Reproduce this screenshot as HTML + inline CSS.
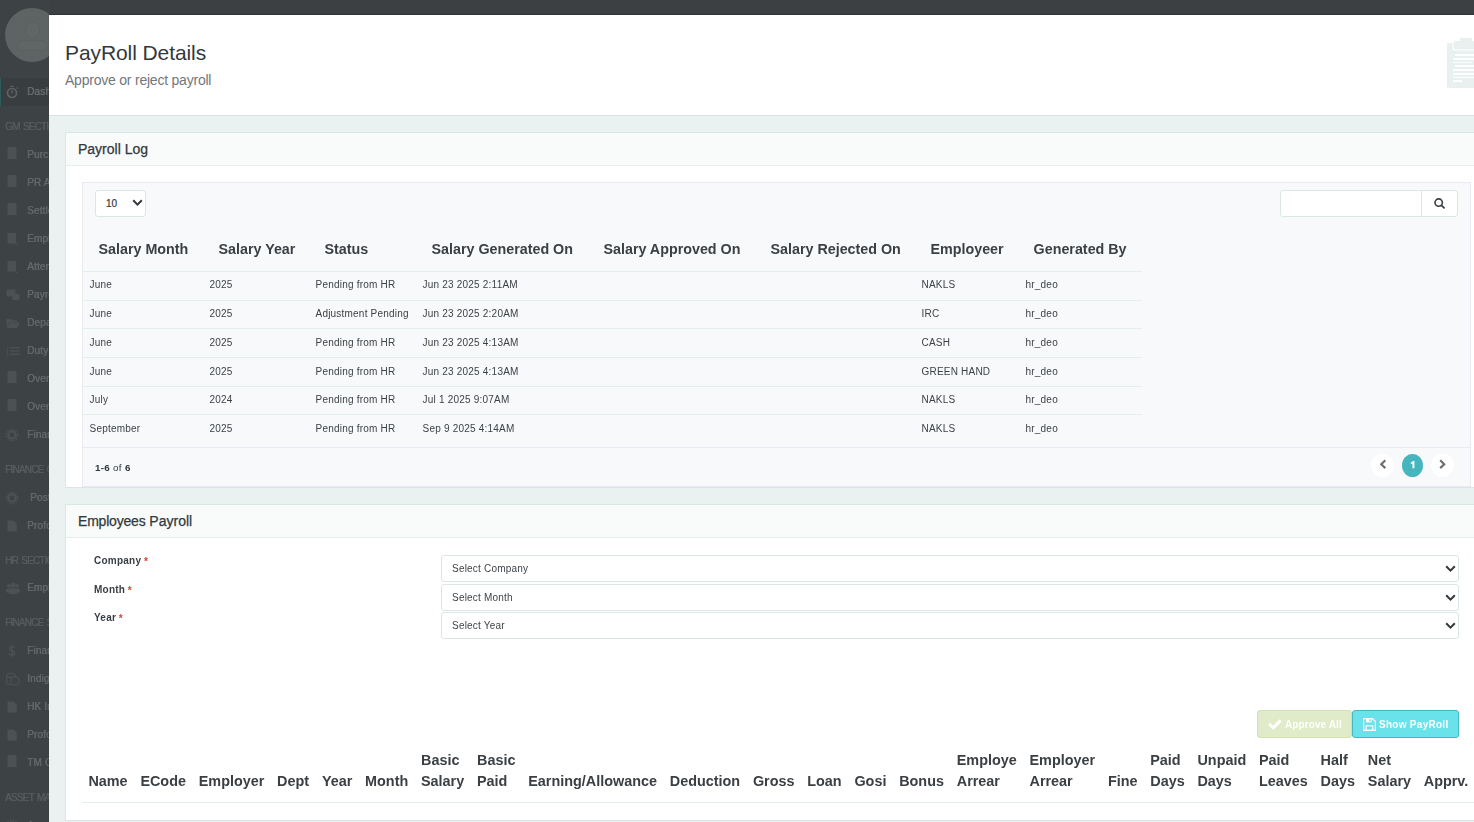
<!DOCTYPE html>
<html>
<head>
<meta charset="utf-8">
<title>PayRoll Details</title>
<style>
*{box-sizing:border-box;margin:0;padding:0}
html,body{width:1474px;height:822px;overflow:hidden;background:#3c4042;font-family:"Liberation Sans",sans-serif;color:#3a3f44}
.abs{position:absolute}
/* ---------- dimmed sidebar ---------- */
#side{position:absolute;left:0;top:0;width:49px;height:822px;background:#3d4244;overflow:hidden}
#side .avatar{position:absolute;left:5.3px;top:7.8px;width:54px;height:54px;border-radius:50%;background:#5e6364;overflow:hidden}
#side .avatar i{position:absolute;background:#606566;border:1px solid #5a5f60;border-radius:50%}
#side .active{position:absolute;left:0;top:78px;width:49px;height:28px;background:#383d3f;border-left:1px solid #2c5c5d}
#side .lbl{position:absolute;left:5px;font-size:10px;line-height:12px;color:#565b5d;white-space:nowrap;letter-spacing:-.8px;word-spacing:1.2px;will-change:transform;text-shadow:.4px 0 0 #565b5d}
#side .it{position:absolute;font-size:10px;letter-spacing:.15px;line-height:14px;color:#62686a;white-space:nowrap;will-change:transform;text-shadow:.4px 0 0 #62686a}
#side .ic{position:absolute}
#topbar{position:absolute;left:49px;top:0;width:1425px;height:15px;background:#3c4042}
/* ---------- modal ---------- */
#modal{position:absolute;left:49px;top:15px;width:1425px;height:807px;background:#e9f2f1;overflow:hidden;box-shadow:0 -1px 1px rgba(0,0,0,.16)}
#hdr{position:absolute;left:0;top:0;width:1425px;height:101px;background:#fff;border-bottom:1px solid #d5e5e3}
#hdr h1{position:absolute;left:16px;top:25px;font-size:21px;letter-spacing:-.09px;font-weight:400;line-height:26px;color:#33383c;white-space:nowrap}
#hdr p{position:absolute;left:16px;top:56px;font-size:14px;letter-spacing:-.22px;line-height:18px;color:#73777b;white-space:nowrap}
.panel{position:absolute;left:16px;width:1425px;background:#fff;border:1px solid #d9e8e6}
.panel .ph{position:absolute;left:0;top:0;width:100%;height:33px;background:#f9fbfb;border-bottom:1px solid #e3eeed}
.panel .ph span{position:absolute;left:12px;top:8px;font-size:14px;line-height:16px;color:#33383c;white-space:nowrap;-webkit-text-stroke:.25px #33383c}

/* ---------- grid (panel 1) ---------- */
#grid{position:absolute;left:16px;top:49px;width:1389px;height:305px;background:#f8f9fb;border:1px solid #e8eaf1}
.sel{position:absolute;background:#fff;border:1px solid #dbe7e6;border-radius:3px}
.chev{position:absolute}
#len{left:12px;top:7px;width:51px;height:27px}
#len span{position:absolute;left:10px;top:7px;font-size:10px;line-height:12px;color:#33383c;-webkit-text-stroke:.2px #33383c}
#srch{position:absolute;left:1197px;top:7px;width:142px;height:27px;background:#fff;border:1px solid #dbe7e6;border-radius:3px 0 0 3px}
#sbtn{position:absolute;left:1338px;top:7px;width:37px;height:27px;background:#fff;border:1px solid #dbe7e6;border-radius:0 3px 3px 0}
#tbl{position:absolute;left:0;top:40px;border-collapse:collapse;table-layout:fixed;width:1059px}
#tbl tr:last-child td{border-bottom:0}
#tbl th{font-size:14.3px;font-weight:700;text-align:left;padding:4px 0 0 15.5px;height:48px;line-height:16px;color:#3a3f44;white-space:nowrap;vertical-align:middle;border-bottom:1px solid #e4eeed}
#tbl td{font-size:10px;letter-spacing:.21px;padding:0 0 0 6.5px;line-height:14px;color:#3d4247;white-space:nowrap;vertical-align:middle;border-bottom:1px solid #e4eeed}
#foot{position:absolute;left:0;top:264px;width:1387px;height:39px;border-top:1px solid #e8eaf1}
#foot .cnt{position:absolute;left:12.4px;top:14px;letter-spacing:.3px;font-size:9.8px;line-height:12px;color:#33383c}
.pg{position:absolute;top:6px;width:23px;height:23px;border-radius:50%;background:#fff}
.pg svg{position:absolute;left:0;top:0}
.pg b{position:absolute;left:0;top:5px;width:21px;text-align:center;font-size:10px;line-height:12px;color:#fff}

/* ---------- panel 2 ---------- */
.flabel{position:absolute;left:28px;font-size:10px;letter-spacing:.23px;font-weight:700;line-height:12px;color:#3a3f44;white-space:nowrap}
.flabel i{font-style:normal;color:#e23b36;font-weight:700;position:relative;top:1px;left:-.3px}
.fsel{left:375px;width:1018px;height:27px}
.fsel span{position:absolute;left:9.6px;top:7px;font-size:10px;letter-spacing:.21px;line-height:12px;color:#3f4449;white-space:nowrap}
.fsel svg{left:1002.5px;top:8.5px}
.btn{position:absolute;top:205px;height:28px;border-radius:3px;border:1px solid;color:#fff;font-size:10.4px;font-weight:700;line-height:12px;white-space:nowrap}
.btn span{position:absolute;top:8px}
.btn svg{position:absolute}
#bApp{left:1191px;width:95px;background:#dfebc9;border-color:#cfe2b1}
#bShow{left:1286px;width:107px;background:#69e2ea;border-color:#45b8c1}
#tbl2{position:absolute;left:16px;top:236px;border-collapse:collapse;white-space:nowrap}
#tbl2 th{font-size:14.4px;font-weight:700;text-align:left;padding:0 6.4px 10px 6.4px;height:61px;line-height:21px;color:#3a3f44;vertical-align:bottom;border-bottom:1px solid #e4eeed}
.gs{will-change:transform}
#tbl tr.r1 td{padding-bottom:2px}
</style>
</head>
<body>
<div id="side">
  <div class="avatar"><i style="left:20px;top:13px;width:15px;height:18px"></i><i style="left:12px;top:32px;width:30px;height:11px;border-radius:6px 6px 3px 3px"></i></div>
  <div class="active"></div>
  <svg class="ic" style="left:5px;top:85px;color:#5e6365" width="14" height="14" viewBox="0 0 14 14" fill="currentColor"><circle cx="7" cy="8" r="4.5" fill="none" stroke="currentColor" stroke-width="1.7"/><rect x="6.3" y="5.2" width="1.4" height="3.6" rx=".7"/><rect x="5.2" y="0.8" width="3.6" height="1.1"/><rect x="11.2" y="2.6" width="1.6" height="1" transform="rotate(40 12 3)"/></svg><div class="it" style="left:27.3px;top:85px;color:#686e70">Dashboard</div>
  <div class="lbl" style="top:121px">GM SECTION</div>
  <svg class="ic" style="left:5px;top:147px;color:#4c5153" width="14" height="14" viewBox="0 0 14 14" fill="currentColor"><rect x="2.5" y="0" width="9" height="12" rx="0.8"/></svg><div class="it" style="left:27.3px;top:148px">Purchase</div>
  <svg class="ic" style="left:5px;top:175px;color:#4c5153" width="14" height="14" viewBox="0 0 14 14" fill="currentColor"><rect x="2.5" y="0" width="9" height="12" rx="0.8"/></svg><div class="it" style="left:27.3px;top:176px">PR Approval</div>
  <svg class="ic" style="left:5px;top:203px;color:#4c5153" width="14" height="14" viewBox="0 0 14 14" fill="currentColor"><rect x="2.5" y="0" width="9" height="12" rx="0.8"/></svg><div class="it" style="left:27.3px;top:204px">Settlement</div>
  <svg class="ic" style="left:5px;top:232px;color:#4c5153" width="14" height="14" viewBox="0 0 14 14" fill="currentColor"><rect x="2.5" y="1" width="8.5" height="10.5" rx="0.8"/><path d="M9 10 L12.5 13.2" stroke="currentColor" stroke-width="1.4"/></svg><div class="it" style="left:27.3px;top:232px">Employee</div>
  <svg class="ic" style="left:5px;top:260px;color:#4c5153" width="14" height="14" viewBox="0 0 14 14" fill="currentColor"><rect x="2.5" y="1" width="8.5" height="10.5" rx="0.8"/><path d="M9 10 L12.5 13.2" stroke="currentColor" stroke-width="1.4"/></svg><div class="it" style="left:27.3px;top:260px">Attendance</div>
  <svg class="ic" style="left:6px;top:288px;color:#4c5153" width="14" height="14" viewBox="0 0 14 14" fill="currentColor"><rect x="0.5" y="1.5" width="9" height="7" rx="1.2"/><rect x="6.5" y="6" width="7" height="6" rx="1.2"/></svg><div class="it" style="left:27.3px;top:288px">Payroll</div>
  <svg class="ic" style="left:6px;top:316px;color:#4c5153" width="14" height="14" viewBox="0 0 14 14" fill="currentColor"><path d="M0.5 3 H5 L6 4.2 H11 V6 H3.5 L0.5 11.5 Z"/><path d="M3.8 6.6 H14 L11 12 H0.8 Z"/></svg><div class="it" style="left:27.3px;top:316px">Department</div>
  <svg class="ic" style="left:6px;top:344px;color:#4c5153" width="14" height="14" viewBox="0 0 14 14" fill="currentColor"><rect x="0.8" y="1.5" width="1.4" height="11" opacity=".6"/><rect x="4" y="3" width="9.5" height="1.4"/><rect x="4" y="6.3" width="9.5" height="1.4"/><rect x="4" y="9.6" width="9.5" height="1.4"/></svg><div class="it" style="left:27.3px;top:344px">Duty Roster</div>
  <svg class="ic" style="left:5px;top:371px;color:#4c5153" width="14" height="14" viewBox="0 0 14 14" fill="currentColor"><rect x="2.5" y="0" width="9" height="12" rx="0.8"/></svg><div class="it" style="left:27.3px;top:372px">Overtime</div>
  <svg class="ic" style="left:5px;top:399px;color:#4c5153" width="14" height="14" viewBox="0 0 14 14" fill="currentColor"><rect x="2.5" y="0" width="9" height="12" rx="0.8"/></svg><div class="it" style="left:27.3px;top:400px">Overtime</div>
  <svg class="ic" style="left:5px;top:428px;color:#4c5153" width="14" height="14" viewBox="0 0 14 14" fill="currentColor"><circle cx="7" cy="7" r="3.6" fill="none" stroke="currentColor" stroke-width="2.2"/><circle cx="7" cy="7" r="5.6" fill="none" stroke="currentColor" stroke-width="1.8" stroke-dasharray="1.7 1.23"/></svg><div class="it" style="left:27.3px;top:428px">Finance</div>
  <div class="lbl" style="top:464px">FINANCE CONTROL</div>
  <svg class="ic" style="left:5px;top:491px;color:#4c5153" width="14" height="14" viewBox="0 0 14 14" fill="currentColor"><circle cx="7" cy="7" r="3.6" fill="none" stroke="currentColor" stroke-width="2.2"/><circle cx="7" cy="7" r="5.6" fill="none" stroke="currentColor" stroke-width="1.8" stroke-dasharray="1.7 1.23"/></svg><div class="it" style="left:30.3px;top:491px">Posting</div>
  <svg class="ic" style="left:5px;top:519px;color:#4c5153" width="14" height="14" viewBox="0 0 14 14" fill="currentColor"><path d="M2.5 1.5 H8.5 L11.8 4.8 V12.5 H2.5 Z"/></svg><div class="it" style="left:27.3px;top:519px">Proforma</div>
  <div class="lbl" style="top:555px">HR SECTION</div>
  <svg class="ic" style="left:6px;top:581px;color:#4c5153" width="14" height="14" viewBox="0 0 14 14" fill="currentColor"><circle cx="7" cy="4" r="2.6"/><circle cx="2.8" cy="4.8" r="1.9"/><circle cx="11.2" cy="4.8" r="1.9"/><path d="M2.6 13 V9.6 Q2.6 7.2 5 7.2 H9 Q11.4 7.2 11.4 9.6 V13 Z"/><path d="M0 11.5 V9 Q0 7.4 1.6 7.4 H3 V11.5 Z M14 11.5 V9 Q14 7.4 12.4 7.4 H11 V11.5 Z"/></svg><div class="it" style="left:27.3px;top:581px">Employee</div>
  <div class="lbl" style="top:617px">FINANCE SECTION</div>
  <svg class="ic" style="left:5px;top:644px;color:#4c5153" width="14" height="14" viewBox="0 0 14 14" fill="currentColor"><path d="M9.6 4.2 Q9.4 2.6 7 2.6 Q4.6 2.6 4.6 4.6 Q4.6 6.2 7 6.8 Q9.6 7.4 9.6 9.2 Q9.6 11.2 7 11.2 Q4.4 11.2 4.2 9.4" fill="none" stroke="currentColor" stroke-width="1.4"/><rect x="6.4" y="0.8" width="1.2" height="12.4"/></svg><div class="it" style="left:27.3px;top:644px">Finance</div>
  <svg class="ic" style="left:6px;top:672px;color:#4c5153" width="14" height="14" viewBox="0 0 14 14" fill="currentColor"><ellipse cx="5" cy="3.4" rx="4.4" ry="2" fill="none" stroke="currentColor" stroke-width="1.2"/><path d="M0.6 3.4 V10.5 Q0.6 12.5 5 12.5" fill="none" stroke="currentColor" stroke-width="1.2"/><circle cx="9" cy="9" r="4.2" fill="none" stroke="currentColor" stroke-width="1.3"/></svg><div class="it" style="left:27.3px;top:672px">Indigo</div>
  <svg class="ic" style="left:5px;top:700px;color:#4c5153" width="14" height="14" viewBox="0 0 14 14" fill="currentColor"><path d="M2.5 1.5 H8.5 L11.8 4.8 V12.5 H2.5 Z"/></svg><div class="it" style="left:27.3px;top:700px">HK Invoice</div>
  <svg class="ic" style="left:5px;top:728px;color:#4c5153" width="14" height="14" viewBox="0 0 14 14" fill="currentColor"><path d="M2.5 1.5 H8.5 L11.8 4.8 V12.5 H2.5 Z"/></svg><div class="it" style="left:27.3px;top:728px">Proforma</div>
  <svg class="ic" style="left:5px;top:755px;color:#4c5153" width="14" height="14" viewBox="0 0 14 14" fill="currentColor"><rect x="2.5" y="0" width="9" height="12" rx="0.8"/></svg><div class="it" style="left:27.3px;top:756px">TM Control</div>
  <div class="lbl" style="top:792px">ASSET MANAGEMENT</div>
  <svg class="ic" style="left:5px;top:819px;color:#4c5153" width="14" height="14" viewBox="0 0 14 14" fill="currentColor"><circle cx="7" cy="7" r="3.6" fill="none" stroke="currentColor" stroke-width="2.2"/><circle cx="7" cy="7" r="5.6" fill="none" stroke="currentColor" stroke-width="1.8" stroke-dasharray="1.7 1.23"/></svg><div class="it" style="left:27.3px;top:819px">Assets</div>
</div>
<div id="topbar"></div>
<div id="modal">
  <div id="hdr">
    <h1>PayRoll Details</h1>
    <p>Approve or reject payroll</p>
    <svg style="position:absolute;left:1396px;top:22px" width="40" height="54" viewBox="0 0 40 54">
      <rect x="2" y="6" width="40" height="45" fill="#e8f1f0"/>
      <rect x="7.5" y="3.2" width="36" height="10.3" rx="2" fill="#fff"/>
      <rect x="8.6" y="4" width="34" height="8.4" rx="1.6" fill="#e8f1f0"/>
      <rect x="14.8" y="0.8" width="12.4" height="5" rx="1.5" fill="#e8f1f0"/>
      <g fill="#fff"><rect x="10" y="17" width="30" height="2"/><rect x="8" y="21" width="32" height="2"/><rect x="8" y="25" width="18.5" height="1"/><rect x="10" y="28" width="30" height="2"/><rect x="8" y="32" width="32" height="2"/><rect x="8" y="36" width="32" height="2"/><rect x="8" y="40" width="32" height="1"/><rect x="8" y="43" width="9" height="2"/></g>
    </svg>
  </div>
  <div class="panel" id="p1" style="top:117px;height:356px">
    <div class="ph"><span>Payroll Log</span></div>
    <div id="grid">
      <div class="sel" id="len"><span>10</span>
        <svg class="chev" style="left:35.5px;top:8.3px" width="11" height="8" viewBox="0 0 11 8"><path d="M1.2 1.2 L5.5 5.6 L9.8 1.2" fill="none" stroke="#33383c" stroke-width="2"/></svg>
      </div>
      <div id="srch"></div>
      <div id="sbtn"><svg style="position:absolute;left:11px;top:6px" width="14" height="14" viewBox="0 0 14 14"><circle cx="5.7" cy="5.6" r="3.7" fill="none" stroke="#3a3f44" stroke-width="1.6"/><path d="M8.4 8.3 L11.1 10.9" stroke="#3a3f44" stroke-width="1.7" stroke-linecap="round"/></svg></div>
      <table id="tbl" class="gs">
        <colgroup><col style="width:120px"><col style="width:106px"><col style="width:107px"><col style="width:172px"><col style="width:167px"><col style="width:160px"><col style="width:104px"><col style="width:123px"></colgroup>
        <tr><th>Salary Month</th><th>Salary Year</th><th>Status</th><th>Salary Generated On</th><th>Salary Approved On</th><th>Salary Rejected On</th><th>Employeer</th><th style="padding-left:14.6px">Generated By</th></tr>
        <tr class="r1" style="height:29px"><td>June</td><td>2025</td><td>Pending from HR</td><td>Jun 23 2025 2:11AM</td><td></td><td></td><td>NAKLS</td><td>hr_deo</td></tr>
        <tr style="height:28px"><td>June</td><td>2025</td><td>Adjustment Pending</td><td>Jun 23 2025 2:20AM</td><td></td><td></td><td>IRC</td><td>hr_deo</td></tr>
        <tr style="height:29px"><td>June</td><td>2025</td><td>Pending from HR</td><td>Jun 23 2025 4:13AM</td><td></td><td></td><td>CASH</td><td>hr_deo</td></tr>
        <tr style="height:29px"><td>June</td><td>2025</td><td>Pending from HR</td><td>Jun 23 2025 4:13AM</td><td></td><td></td><td>GREEN HAND</td><td>hr_deo</td></tr>
        <tr style="height:28px"><td>July</td><td>2024</td><td>Pending from HR</td><td>Jul 1 2025 9:07AM</td><td></td><td></td><td>NAKLS</td><td>hr_deo</td></tr>
        <tr style="height:30px"><td>September</td><td>2025</td><td>Pending from HR</td><td>Sep 9 2025 4:14AM</td><td></td><td></td><td>NAKLS</td><td>hr_deo</td></tr>
      </table>
      <div id="foot"><span class="cnt gs"><b>1-6</b> of <b>6</b></span>
        <div class="pg" style="left:1288px"><svg width="23" height="23" viewBox="0 0 23 23"><path d="M14.3 6.3 L10.3 10.2 L14.3 14.1" fill="none" stroke="#6f6f6f" stroke-width="2.2"/></svg></div>
        <div class="pg" style="left:1319px;width:21px;background:#47b5be"><svg width="21" height="23" viewBox="0 0 21 23"><path d="M12.4 7 V14.2 H10.5 V9.3 Q9.7 9.9 8.8 10.1 V8.6 Q10.3 8.1 11 7 Z" fill="#fff"/></svg></div>
        <div class="pg" style="left:1348px"><svg width="23" height="23" viewBox="0 0 23 23"><path d="M9.2 6.3 L13.2 10.2 L9.2 14.1" fill="none" stroke="#6f6f6f" stroke-width="2.2"/></svg></div>
      </div>
    </div>

  </div>
  <div class="panel" id="p2" style="top:489px;height:317px">
    <div class="ph"><span><span style="position:static;letter-spacing:-.2px">Employees</span> Payroll</span></div>
    <div class="flabel gs" style="top:50px">Company <i>*</i></div>
    <div class="flabel gs" style="top:79px">Month <i>*</i></div>
    <div class="flabel gs" style="top:107px">Year <i>*</i></div>
    <div class="sel fsel" style="top:50px"><span class="gs">Select Company</span><svg class="chev" width="11" height="8" viewBox="0 0 11 8"><path d="M1.2 1.2 L5.5 5.6 L9.8 1.2" fill="none" stroke="#33383c" stroke-width="2"/></svg></div>
    <div class="sel fsel" style="top:79px"><span class="gs">Select Month</span><svg class="chev" width="11" height="8" viewBox="0 0 11 8"><path d="M1.2 1.2 L5.5 5.6 L9.8 1.2" fill="none" stroke="#33383c" stroke-width="2"/></svg></div>
    <div class="sel fsel" style="top:107px"><span class="gs">Select Year</span><svg class="chev" width="11" height="8" viewBox="0 0 11 8"><path d="M1.2 1.2 L5.5 5.6 L9.8 1.2" fill="none" stroke="#33383c" stroke-width="2"/></svg></div>
    <div class="btn" id="bApp"><svg style="left:10px;top:8px" width="14" height="12" viewBox="0 0 14 12"><path d="M0 6 L2.2 3.8 L5.2 6.8 L11.6 0.3 L13.8 2.5 L5.2 11.1 Z" fill="#fff"/></svg><span style="left:27px;font-size:10px;letter-spacing:.1px">Approve All</span></div>
    <div class="btn" id="bShow"><svg style="left:10px;top:7px" width="14" height="14" viewBox="0 0 14 14"><path d="M0.6 0.6 H9.4 L12.4 3.6 V12.4 H0.6 Z" fill="none" stroke="#fff" stroke-width="1.2"/><rect x="3" y="0.6" width="5.6" height="3.8" fill="#fff"/><rect x="6.3" y="1.3" width="1.3" height="2.2" fill="#69e2ea"/><rect x="3.2" y="7.8" width="6.6" height="4.6" fill="none" stroke="#fff" stroke-width="1.2"/></svg><span style="left:26px;font-size:10px;letter-spacing:.28px">Show PayRoll</span></div>
    <table id="tbl2"><tr>
      <th>Name</th><th>ECode</th><th>Employer</th><th>Dept</th><th>Year</th><th>Month</th><th>Basic<br>Salary</th><th>Basic<br>Paid</th><th>Earning/Allowance</th><th>Deduction</th><th>Gross</th><th>Loan</th><th>Gosi</th><th>Bonus</th><th>Employe<br>Arrear</th><th>Employer<br>Arrear</th><th>Fine</th><th>Paid<br>Days</th><th>Unpaid<br>Days</th><th>Paid<br>Leaves</th><th>Half<br>Days</th><th>Net<br>Salary</th><th>Apprv.</th><th>Action</th>
    </tr></table>

  </div>
</div>
</body>
</html>
